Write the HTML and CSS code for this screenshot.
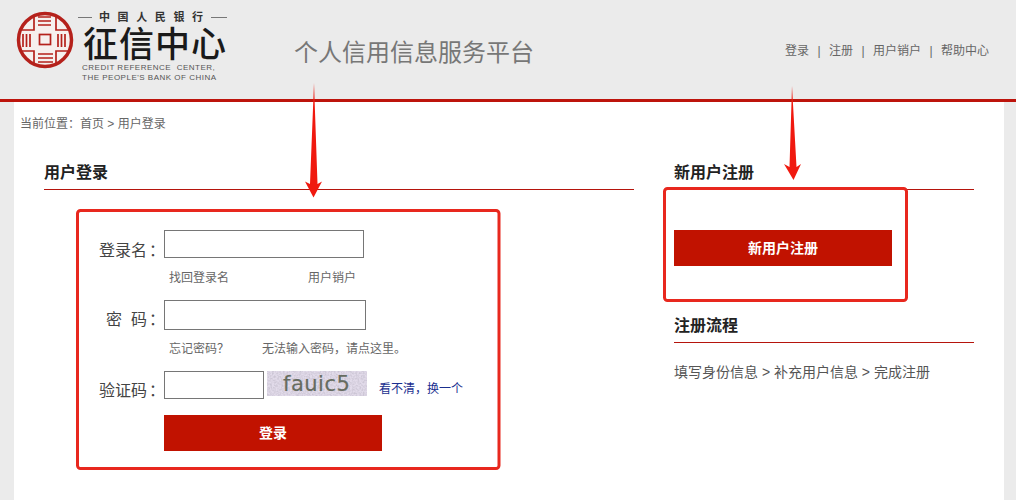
FILE: index.html
```html
<!DOCTYPE html>
<html lang="zh-CN">
<head>
  <meta charset="UTF-8" />
  <title>个人信用信息服务平台</title>
  <link rel="stylesheet" href="styles.css">
</head>
<body>
  <div class="header">
    <div class="logo">
      <svg class="seal" width="58" height="58" viewBox="0 0 58 58">
        <circle cx="29" cy="29" r="26.500" fill="#f6f0ee" stroke="#b5211b" stroke-width="3.500"/>
        <g fill="none" stroke="#b5211b" stroke-width="1.700">
          <rect x="23.500" y="23.500" width="11" height="10"/>
          <path d="M22 6H35M22 10H35M22 14H35"/>
          <path d="M22 43H37M22 47H37M22 51H37"/>
          <path d="M7 23V36M10.500 23V36M14 23V36"/>
          <path d="M42 23V36M45.500 23V36M49 23V36"/>
          <path d="M18 4V19H4"/>
          <path d="M40 5V19H54"/>
          <path d="M4 40H18V54"/>
          <path d="M54 40H40V54"/>
        </g>
      </svg>
      <div class="logo-text">
        <div class="logo-bank"><span class="logo-dash"></span>中国人民银行<span class="logo-dash"></span></div>
        <div class="logo-name">征信中心</div>
        <div class="logo-en">CREDIT REFERENCE&nbsp; CENTER,</div>
        <div class="logo-en">THE PEOPLE'S BANK OF CHINA</div>
      </div>
    </div>
    <div class="site-title">个人信用信息服务平台</div>
    <div class="top-nav">
      <a>登录</a><span>|</span><a>注册</a><span>|</span><a>用户销户</a><span>|</span><a>帮助中心</a>
    </div>
  </div>

  <div class="main">
    <div class="crumb">当前位置<span class="colon">：</span>首页 &gt; 用户登录</div>
    <div class="columns">
      <div class="col-left">
        <h2>用户登录</h2>
        <form class="login">
          <div class="row row-name">
            <label>登录名<span class="colon">：</span></label>
            <input type="text" class="input-name">
          </div>
          <div class="hints hints-name"><a>找回登录名</a><a>用户销户</a></div>
          <div class="row row-pass">
            <label>密&nbsp;&nbsp;码<span class="colon">：</span></label>
            <input type="text" class="input-pass">
          </div>
          <div class="hints hints-pass"><a>忘记密码？</a><a>无法输入密码，请点这里。</a></div>
          <div class="row row-code">
            <label>验证码<span class="colon">：</span></label>
            <input type="text" class="input-code">
            <svg class="captcha" width="100" height="25" viewBox="0 0 100 25">
              <filter id="grain" x="0" y="0" width="100%" height="100%">
                <feTurbulence type="fractalNoise" baseFrequency="0.55" numOctaves="2" seed="4"/>
                <feColorMatrix values="0 0 0 0 0.6  0 0 0 0 0.56  0 0 0 0 0.66  2.2 0 0 0 -0.75"/>
              </filter>
              <rect width="100" height="25" fill="#e2dbea"/>
              <rect width="100" height="25" filter="url(#grain)"/>
              <text x="16" y="20" class="captcha-text">fauic5</text>
            </svg>
            <a class="refresh">看不清，换一个</a>
          </div>
          <button type="button" class="btn btn-login">登录</button>
        </form>
      </div>
      <div class="col-right">
        <h2>新用户注册</h2>
        <button type="button" class="btn btn-register">新用户注册</button>
        <h2 class="flow-title">注册流程</h2>
        <p class="flow">填写身份信息 &gt; 补充用户信息 &gt; 完成注册</p>
      </div>
    </div>
  </div>

  <!-- red markup drawn on top of the screenshot -->
  <svg class="marks" width="1016" height="500" viewBox="0 0 1016 500">
    <g fill="none" stroke="#e8281e" stroke-width="3">
      <rect x="77.500" y="210.500" width="421.500" height="258" rx="3"/>
      <rect x="664.500" y="188.500" width="242" height="112" rx="3"/>
    </g>
    <g fill="#f0190f">
      <path d="M314 83L317.500 184L322 181.500L313.500 197.500L305 181.500L310 184Z"/>
      <path d="M792 86L796.500 167L801 164L793.500 180L784 164L789.500 167Z"/>
    </g>
  </svg>
</body>
</html>
```

FILE: styles.css
```css
body {
  margin: 0;
  background: #ebebeb;
  font-family: "Liberation Sans", "Noto Sans CJK SC", sans-serif;
  color: #666;
  font-size: 12px;
  height: 500px;
  overflow: hidden;
}
.header {
  height: 99px;
  border-bottom: 3px solid #bd140c;
  display: flex;
  align-items: flex-start;
}
.logo {
  display: flex;
  width: 294px;
  flex: none;
  padding: 11px 0 0 16px;
  box-sizing: border-box;
}
.seal {
  flex: none;
}
.logo-text {
  margin-left: 4px;
  color: #222;
  width: 150px;
}
.logo-bank {
  display: flex;
  align-items: center;
  font-size: 11px;
  line-height: 12px;
  letter-spacing: 7.6px;
  font-weight: 700;
  color: #333;
  white-space: nowrap;
}
.logo-dash {
  width: 16px;
  height: 1px;
  background: #777;
}
.logo-dash:first-child {
  width: 14px;
  margin-right: 7px;
}
.logo-name {
  font-size: 35px;
  line-height: 37px;
  font-weight: 500;
  color: #1a1a1a;
  margin: 3px 0 0 5px;
  letter-spacing: 1px;
  white-space: nowrap;
}
.logo-en {
  font-size: 8px;
  line-height: 10px;
  letter-spacing: 0.5px;
  margin-left: 4px;
  color: #555;
  white-space: nowrap;
}
.site-title {
  font-size: 24px;
  line-height: 34px;
  color: #777;
  margin-top: 36px;
  flex: 1;
}
.top-nav {
  margin: 43px 27px 0 0;
  line-height: 17px;
  color: #666;
  white-space: nowrap;
}
.top-nav span {
  display: inline-block;
  width: 20px;
  text-align: center;
}
.main {
  margin: 0 12px 0 14px;
  background: #fff;
  height: 398px;
}
.crumb {
  padding: 14px 0 0 6px;
  line-height: 17px;
}
.colon {
  font-family: "Noto Sans CJK TC", sans-serif;
  line-height: 0;
}
.columns {
  display: flex;
  padding: 28px 0 0 30px;
  gap: 40px;
}
.col-left {
  width: 590px;
}
.col-right {
  width: 300px;
}
h2 {
  margin: 0;
  font-size: 16px;
  line-height: 24px;
  height: 28px;
  color: #222;
  font-weight: 700;
  border-bottom: 1px solid #b5140c;
}
.login {
  padding: 40px 0 0 120px;
}
.row {
  display: flex;
  align-items: center;
}
.row-name,
.row-code {
  height: 28px;
}
.row-pass {
  height: 30px;
}
.row label {
  width: 120px;
  margin: 14px 0 0 -120px;
  text-align: right;
  font-size: 16px;
  line-height: 20px;
  color: #444;
  white-space: nowrap;
}
.row label .colon {
  margin: 0 -1px 0 2px;
}
.row-pass label {
  margin-top: 10px;
}
.row-code label {
  margin-top: 12px;
}
input {
  box-sizing: border-box;
  border: 1px solid #767676;
  background: #fff;
  margin: 0;
  padding: 0;
  flex: none;
}
.input-name {
  width: 200px;
  height: 28px;
}
.input-pass {
  width: 202px;
  height: 30px;
}
.input-code {
  width: 100px;
  height: 28px;
}
.hints {
  display: flex;
  padding-left: 5px;
  line-height: 17px;
  color: #666;
}
.hints-name {
  margin: 12px 0 13px;
}
.hints-name a:first-child {
  width: 139px;
}
.hints-pass {
  margin: 11px 0 13px;
}
.hints-pass a:first-child {
  width: 93px;
}
.captcha {
  margin: 0 0 3px 3px;
  flex: none;
}
.captcha-text {
  font-family: "DejaVu Sans", sans-serif;
  font-size: 21px;
  fill: #666c60;
  stroke: #666c60;
  stroke-width: 0.2px;
  letter-spacing: 0.5px;
}
.refresh {
  color: #1a2f8f;
  margin: 4px 0 0 12px;
  white-space: nowrap;
}
.btn {
  display: block;
  width: 218px;
  height: 36px;
  border: none;
  padding: 0 0 3px;
  background: #c11200;
  color: #fff;
  font-family: inherit;
  font-size: 14px;
  font-weight: 700;
}
.btn-login {
  margin-top: 16px;
}
.btn-register {
  margin-top: 40px;
}
.flow-title {
  margin-top: 49px;
  line-height: 22px;
  height: 27px;
}
.flow {
  margin: 19px 0 0;
  font-size: 14px;
  line-height: 20px;
  color: #555;
}
.marks {
  position: absolute;
  top: 0;
  left: 0;
}
```
